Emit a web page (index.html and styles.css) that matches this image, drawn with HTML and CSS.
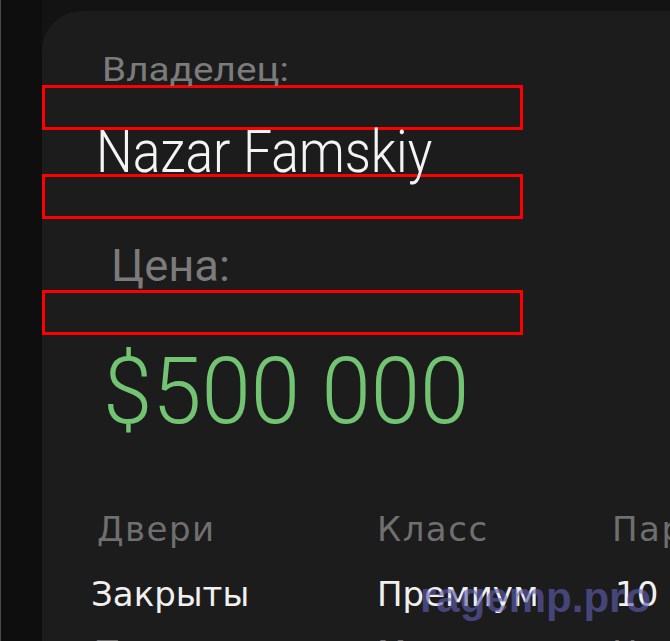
FILE: index.html
```html
<!DOCTYPE html>
<html lang="ru">
<head>
<meta charset="utf-8">
<title>Владелец</title>
<link rel="stylesheet" href="styles.css">
</head>
<body>
<div class="screen">
  <aside class="rail"></aside>
  <main class="stage">
    <section class="card">
      <div class="label owner-label"><span class="stretch owner-text">Владелец:</span></div>
      <div class="mark"></div>
      <div class="name"><span class="stretch name-text">Nazar Famskiy</span></div>
      <div class="mark"></div>
      <div class="label price-label"><span class="stretch price-label-text">Цена:</span></div>
      <div class="mark"></div>
      <div class="price"><span class="stretch price-text">$500 000</span></div>
      <div class="specs">
        <div class="spec-label">Двери</div>
        <div class="spec-label">Класс</div>
        <div class="spec-label">Парковка</div>
        <div class="spec-value spec-first">Закрыты</div>
        <div class="spec-value">Премиум</div>
        <div class="spec-value spec-last">10 мест</div>
        <div class="spec-label spec-next">Тип</div>
        <div class="spec-label spec-next">Мест</div>
        <div class="spec-label spec-next">Налог</div>
      </div>
      <div class="watermark">ragemp.pro</div>
    </section>
  </main>
</div>
</body>
</html>
```

FILE: styles.css
```css
html, body {
  margin: 0;
  padding: 0;
  width: 670px;
  height: 641px;
  overflow: hidden;
  background: #131313;
}

.screen {
  display: flex;
  width: 670px;
  height: 641px;
  overflow: hidden;
}

.rail {
  flex: 0 0 41px;
  background: #0e0e0e;
  border-left: 1px solid #4a4a4a;
}

.stage {
  flex: 1 1 auto;
  padding-top: 11px;
  background: #131313;
  min-width: 0;
  overflow: hidden;
}

.card {
  position: relative;
  width: 628px;
  height: 630px;
  box-sizing: border-box;
  padding-top: 42px;
  background: #1c1c1c;
  border-top-left-radius: 40px;
  overflow: hidden;
}

.stretch {
  display: inline-block;
  transform-origin: left center;
}

.label {
  font-family: Roboto, "Noto Sans", sans-serif;
  font-weight: 400;
  color: #7b7b7b;
}

.owner-label {
  font-size: 34px;
  line-height: 32px;
  padding-left: 60px;
}

.owner-text {
  transform: scaleX(1.14);
}

.price-label {
  font-size: 44px;
  line-height: 47px;
  margin-top: 24px;
  padding-left: 69px;
}

.price-label-text {
  transform: scaleX(1.03);
}

.mark {
  width: 481px;
  height: 45px;
  box-sizing: border-box;
  border: 3px solid #ff0000;
}

.name {
  height: 44px;
  line-height: 44px;
  padding-left: 54px;
  font-family: Roboto, sans-serif;
  font-weight: 300;
  font-size: 60px;
  color: #f4f4f4;
  white-space: nowrap;
}

.name-text {
  transform: scaleX(0.86);
}

.price {
  height: 114px;
  line-height: 114px;
  padding-left: 61px;
  font-family: Roboto, sans-serif;
  font-weight: 300;
  font-size: 92px;
  color: #72c473;
  white-space: nowrap;
}

.price-text {
  transform: scaleX(0.965);
}

.specs {
  display: grid;
  grid-template-columns: 280px 235px 120px;
  grid-template-rows: 40px 40px 40px;
  margin-top: 60px;
  padding-left: 55px;
  font-family: "DejaVu Sans", sans-serif;
  font-size: 34px;
  line-height: 40px;
  white-space: nowrap;
}

.spec-label {
  color: #6f6f6f;
  letter-spacing: 1.5px;
}

.spec-value {
  color: #f0f0f0;
  margin-top: 25px;
}

.spec-first {
  margin-left: -6px;
}

.spec-last {
  margin-left: 3px;
}

.spec-next {
  margin-top: 44px;
}

.watermark {
  position: absolute;
  left: 378px;
  top: 563px;
  font-family: "Liberation Sans", Arial, sans-serif;
  font-weight: 700;
  font-size: 42px;
  line-height: 48px;
  color: rgba(94, 94, 178, 0.64);
}
```
